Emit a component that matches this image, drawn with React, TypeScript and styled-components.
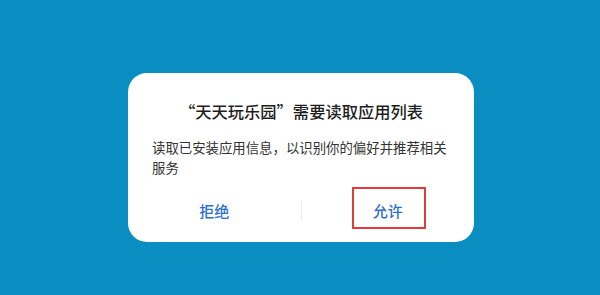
import styled, { createGlobalStyle } from "styled-components";

const GlobalStyle = createGlobalStyle`
    html, body {
        margin: 0;
        padding: 0;
    }
    body {
        font-family: "Noto Sans CJK SC", "Noto Sans", sans-serif;
        background: #0a8ec2;
    }
`;

function App() {
    return (
        <Page>
            <GlobalStyle />
            <Dialog>
                <Title>“天天玩乐园”需要读取应用列表</Title>
                <Message>读取已安装应用信息，以识别你的偏好并推荐相关服务</Message>
                <Actions>
                    <ActionButton>拒绝</ActionButton>
                    <Divider />
                    <ActionButton $marked>
                        允许
                    </ActionButton>
                </Actions>
            </Dialog>
        </Page>
    );
}

export default App;

const Page = styled.div`
    width: 600px;
    height: 295px;
    background: #0a8ec2;
    display: flex;
    justify-content: center;
    align-items: flex-start;
    padding-top: 73px;
    padding-left: 2px;
    box-sizing: border-box;
`;

const Dialog = styled.div`
    width: 346px;
    height: 169px;
    box-sizing: border-box;
    background: #ffffff;
    border-radius: 19px;
    padding: 26px 24px 0;
    display: flex;
    flex-direction: column;
`;

const Title = styled.h2`
    margin: 0;
    font-size: 16.3px;
    line-height: 24px;
    font-weight: 500;
    color: #1e1e1e;
    text-align: center;
    white-space: nowrap;
`;

const Message = styled.p`
    margin: 14px 0 0;
    font-size: 13.4px;
    line-height: 20px;
    color: #333333;
`;

const Actions = styled.div`
    margin: 11px -24px 0;
    height: 44px;
    display: flex;
    align-items: center;
`;

const ActionButton = styled.button<{ $marked?: boolean }>`
    position: relative;
    flex: 1;
    height: 44px;
    border: none;
    background: transparent;
    padding: 0;
    font-family: inherit;
    font-size: 15px;
    font-weight: 500;
    color: #2d6fce;
    cursor: pointer;

    &::after {
        content: "";
        display: ${(p) => (p.$marked ? "block" : "none")};
        position: absolute;
        left: 50%;
        top: -1px;
        width: 74px;
        height: 42px;
        margin-left: -36px;
        border: 2px solid #e33a3a;
        box-sizing: border-box;
    }
`;

const Divider = styled.div`
    width: 1px;
    height: 20px;
    background: #ececec;
`;
